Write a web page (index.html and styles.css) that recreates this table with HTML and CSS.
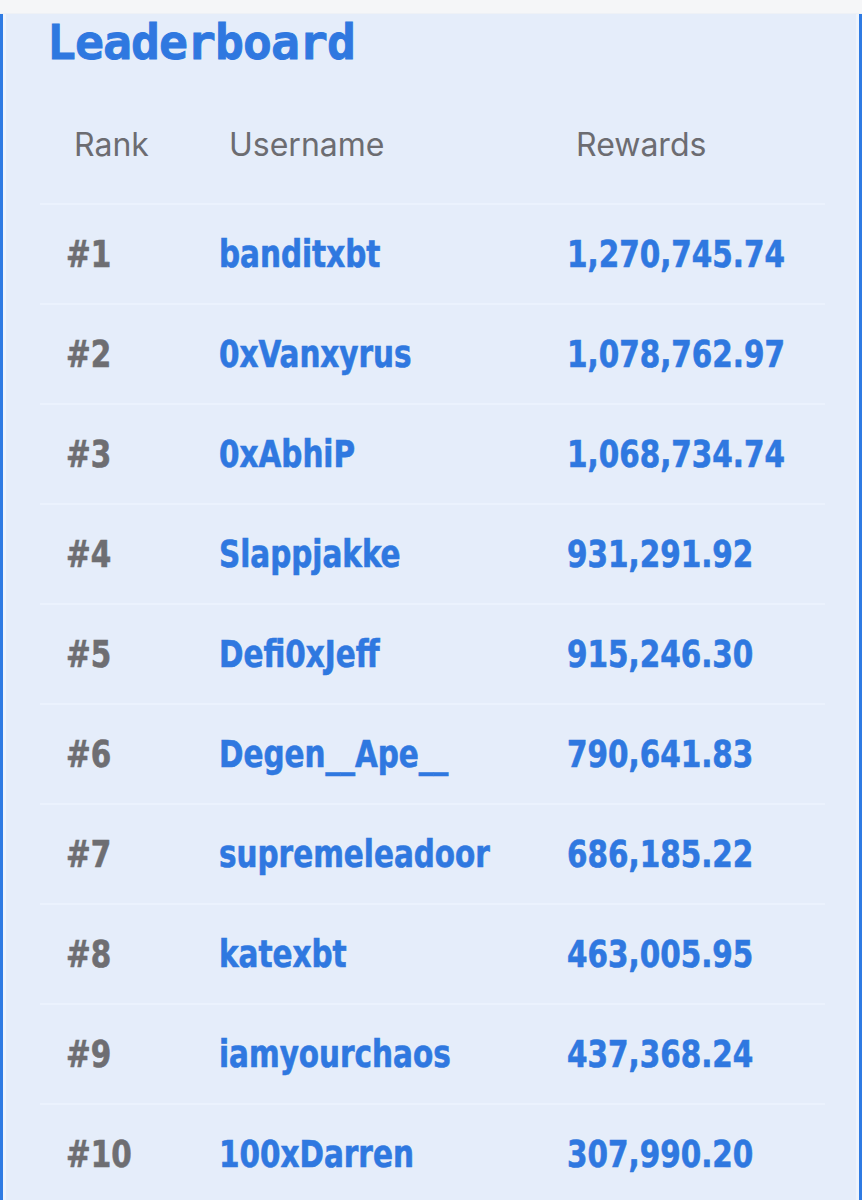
FILE: index.html
```html
<!DOCTYPE html>
<html lang="en">
<head>
<meta charset="utf-8">
<title>Leaderboard</title>
<link rel="stylesheet" href="styles.css">
</head>
<body>
<div class="topbar"></div>
<section class="panel">
  <h1 class="title">Leaderboard</h1>
  <div class="table">
    <div class="head">
      <span class="h-rank">Rank</span>
      <span class="h-user">Username</span>
      <span class="h-rew">Rewards</span>
    </div>
    <div class="row"><span class="rank">#1</span><span class="user">banditxbt</span><span class="rew">1,270,745.74</span></div>
    <div class="row"><span class="rank">#2</span><span class="user">0xVanxyrus</span><span class="rew">1,078,762.97</span></div>
    <div class="row"><span class="rank">#3</span><span class="user">0xAbhiP</span><span class="rew">1,068,734.74</span></div>
    <div class="row"><span class="rank">#4</span><span class="user">Slappjakke</span><span class="rew">931,291.92</span></div>
    <div class="row"><span class="rank">#5</span><span class="user">Defi0xJeff</span><span class="rew">915,246.30</span></div>
    <div class="row"><span class="rank">#6</span><span class="user">Degen__Ape__</span><span class="rew">790,641.83</span></div>
    <div class="row"><span class="rank">#7</span><span class="user">supremeleadoor</span><span class="rew">686,185.22</span></div>
    <div class="row"><span class="rank">#8</span><span class="user">katexbt</span><span class="rew">463,005.95</span></div>
    <div class="row"><span class="rank">#9</span><span class="user">iamyourchaos</span><span class="rew">437,368.24</span></div>
    <div class="row"><span class="rank">#10</span><span class="user">100xDarren</span><span class="rew">307,990.20</span></div>
  </div>
</section>
</body>
</html>
```

FILE: styles.css
```css
html, body {
  margin: 0;
  padding: 0;
  background: #e5edfa;
}
body {
  width: 862px;
  height: 1200px;
  overflow: hidden;
}
.topbar {
  height: 14px;
  background: #f5f6f8;
  border-bottom: 1px solid #eef1f6;
  box-sizing: border-box;
}
.panel {
  background: #e5edfa;
  border-left: 3px solid #2f7be3;
  border-right: 3px solid #2f7be3;
  box-shadow: inset 3px 0 0 #eef4fd, inset -3px 0 0 #eef4fd;
  height: 1200px;
  box-sizing: border-box;
  padding: 0 0 0 37px;
}
.title {
  margin: 0;
  padding: 0 0 0 7px;
  height: 66px;
  font-family: "DejaVu Sans Mono", monospace;
  font-weight: bold;
  font-size: 48px;
  line-height: 56px;
  letter-spacing: -0.9px;
  color: #2f78e0;
  -webkit-text-stroke: 0.9px #2f78e0;
}
.table {
  width: 785px;
}
.head {
  display: grid;
  grid-template-columns: 155px 347px 1fr;
  height: 123px;
  padding: 45px 0 0 34px;
  box-sizing: border-box;
  font-family: "Inter", "Noto Sans", sans-serif;
  font-size: 32px;
  line-height: 40px;
  color: #6c6c71;
}
.row {
  display: grid;
  grid-template-columns: 153px 348px 1fr;
  align-items: center;
  height: 100px;
  padding-left: 26px;
  box-sizing: border-box;
  border-top: 2px solid #ebf2fd;
  font-family: "DejaVu Sans Condensed", "DejaVu Sans", sans-serif;
  font-weight: bold;
  font-size: 37px;
}
.row span {
  display: inline-block;
  justify-self: start;
  transform: scaleX(0.885);
  transform-origin: left center;
  white-space: nowrap;
  -webkit-text-stroke: 0.6px currentColor;
}
.rank {
  color: #6e6e72;
}
.user, .rew {
  color: #2f78e0;
}
```
